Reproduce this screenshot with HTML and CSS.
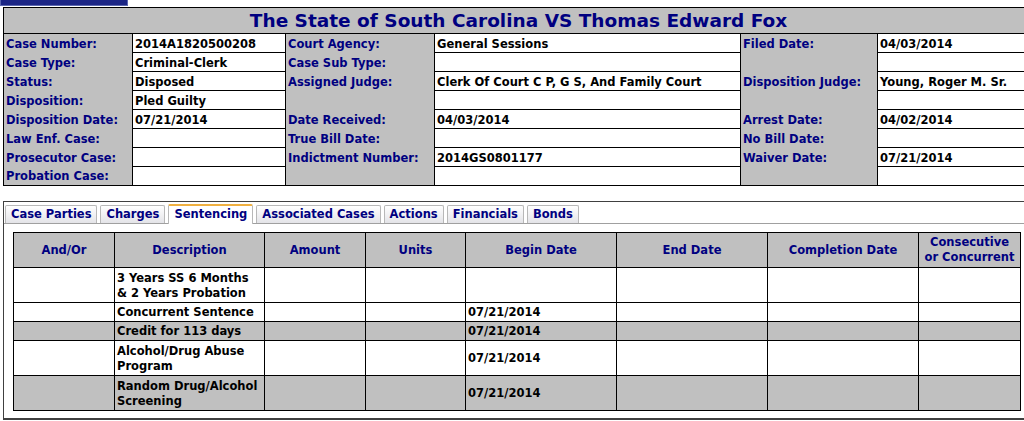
FILE: index.html
```html
<!DOCTYPE html>
<html>
<head>
<meta charset="utf-8">
<link rel="stylesheet" href="styles.css">
</head>
<body>
<div class="topbar"></div>
<table class="case">
  <colgroup>
    <col class="c1"><col class="c2"><col class="c3"><col class="c4"><col class="c5"><col class="c6">
  </colgroup>
  <tr><td colspan="6" class="title">The State of South Carolina VS Thomas Edward Fox</td></tr>
  <tr><td class="lbl">Case Number:</td><td class="val">2014A1820500208</td><td class="lbl">Court Agency:</td><td class="val">General Sessions</td><td class="lbl">Filed Date:</td><td class="val">04/03/2014</td></tr>
  <tr><td class="lbl">Case Type:</td><td class="val">Criminal-Clerk</td><td class="lbl">Case Sub Type:</td><td class="val"></td><td class="lbl"></td><td class="val"></td></tr>
  <tr><td class="lbl">Status:</td><td class="val">Disposed</td><td class="lbl">Assigned Judge:</td><td class="val">Clerk Of Court C P, G S, And Family Court</td><td class="lbl">Disposition Judge:</td><td class="val">Young, Roger M. Sr.</td></tr>
  <tr><td class="lbl">Disposition:</td><td class="val">Pled Guilty</td><td class="lbl"></td><td class="val"></td><td class="lbl"></td><td class="val"></td></tr>
  <tr><td class="lbl">Disposition Date:</td><td class="val">07/21/2014</td><td class="lbl">Date Received:</td><td class="val">04/03/2014</td><td class="lbl">Arrest Date:</td><td class="val">04/02/2014</td></tr>
  <tr><td class="lbl">Law Enf. Case:</td><td class="val"></td><td class="lbl">True Bill Date:</td><td class="val"></td><td class="lbl">No Bill Date:</td><td class="val"></td></tr>
  <tr><td class="lbl">Prosecutor Case:</td><td class="val"></td><td class="lbl">Indictment Number:</td><td class="val">2014GS0801177</td><td class="lbl">Waiver Date:</td><td class="val">07/21/2014</td></tr>
  <tr><td class="lbl">Probation Case:</td><td class="val"></td><td class="lbl"></td><td class="val"></td><td class="lbl"></td><td class="val"></td></tr>
</table>

<div class="panel">
  <ul class="tabs">
    <li class="tab">Case Parties</li>
    <li class="tab">Charges</li>
    <li class="tab active">Sentencing</li>
    <li class="tab">Associated Cases</li>
    <li class="tab">Actions</li>
    <li class="tab">Financials</li>
    <li class="tab">Bonds</li>
  </ul>
  <div class="panel-body">
    <table class="sent">
      <colgroup>
        <col class="s1"><col class="s2"><col class="s3"><col class="s4"><col class="s5"><col class="s6"><col class="s7"><col class="s8">
      </colgroup>
      <tr class="head"><th>And/Or</th><th>Description</th><th>Amount</th><th>Units</th><th>Begin Date</th><th>End Date</th><th>Completion Date</th><th>Consecutive<br>or Concurrent</th></tr>
      <tr class="tall"><td></td><td>3 Years SS 6 Months<br>&amp; 2 Years Probation</td><td></td><td></td><td></td><td></td><td></td><td></td></tr>
      <tr><td></td><td>Concurrent Sentence</td><td></td><td></td><td>07/21/2014</td><td></td><td></td><td></td></tr>
      <tr class="alt"><td></td><td>Credit for 113 days</td><td></td><td></td><td>07/21/2014</td><td></td><td></td><td></td></tr>
      <tr class="tall"><td></td><td>Alcohol/Drug Abuse<br>Program</td><td></td><td></td><td>07/21/2014</td><td></td><td></td><td></td></tr>
      <tr class="tall alt"><td></td><td>Random Drug/Alcohol<br>Screening</td><td></td><td></td><td>07/21/2014</td><td></td><td></td><td></td></tr>
    </table>
  </div>
</div>
</body>
</html>
```

FILE: styles.css
```css
html, body {
  margin: 0;
  padding: 0;
  background: #ffffff;
  overflow: hidden;
}
body {
  font-family: "DejaVu Sans", Verdana, sans-serif;
  font-size: 11.5px;
  font-weight: bold;
  width: 1024px;
  height: 421px;
}
.topbar {
  width: 126px;
  height: 5px;
  background: #1b2585;
  border: 1px solid #5a66b0;
  border-top: none;
  margin-left: 0;
}
.case {
  border-collapse: collapse;
  table-layout: fixed;
  width: 1030px;
  margin-left: 3px;
  margin-top: 1px;
  border: 1px solid #000;
}
.c1 { width: 129px; }
.c2 { width: 153px; }
.c3 { width: 149px; }
.c4 { width: 306px; }
.c5 { width: 137px; }
.c6 { width: 156px; }
.case td {
  height: 17px;
  padding: 1px 0 0 2px;
  white-space: nowrap;
  overflow: hidden;
  line-height: 14px;
}
.case .title {
  height: 25px;
  background: #c0c0c0;
  color: #000080;
  text-align: center;
  font-size: 18.5px;
  line-height: 24px;
  border-bottom: 1px solid #000;
  padding: 0;
}
.case .lbl {
  background: #c0c0c0;
  color: #000080;
}
.case .val {
  background: #ffffff;
  color: #000;
  border: 1px solid #000;
}
.panel {
  margin: 15px 0 0 3px;
  width: 1021px;
  height: 219px;
  border: 1px solid #404040;
  border-right: none;
  border-bottom: 2px solid #404040;
  box-sizing: border-box;
}
.tabs {
  list-style: none;
  margin: 0;
  padding: 3px 0 0 1px;
  display: flex;
  gap: 3px;
  border-bottom: 1px solid #a0a0a0;
  height: 18px;
  align-items: flex-end;
  box-sizing: content-box;
}
.tab {
  height: 17px;
  line-height: 17px;
  padding: 0 5px;
  border: 1px solid #b8b8b8;
  border-bottom: none;
  border-radius: 2px 2px 0 0;
  background: linear-gradient(#ffffff, #e4e4e8);
  color: #000080;
  box-sizing: content-box;
}
.tab.active {
  background: #ffffff;
  border-top: 2px solid #f0b040;
  height: 17px;
  margin-bottom: -1px;
  padding-bottom: 1px;
}
.panel-body {
  padding: 8px 0 0 9px;
}
.sent {
  border-collapse: collapse;
  table-layout: fixed;
  width: 1007px;
  border: 1px solid #000;
}
.s1 { width: 101px; }
.s2 { width: 150px; }
.s3 { width: 101px; }
.s4 { width: 100px; }
.s5 { width: 151px; }
.s6 { width: 151px; }
.s7 { width: 151px; }
.s8 { width: 102px; }
.sent th {
  background: #c0c0c0;
  color: #000080;
  height: 34px;
  border: 1px solid #000;
  padding: 0;
  line-height: 15px;
  font-weight: bold;
}
.sent td {
  border: 1px solid #000;
  height: 17px;
  padding: 1px 0 0 2px;
  line-height: 15px;
  color: #000;
  vertical-align: middle;
  white-space: nowrap;
  overflow: hidden;
}
.sent tr.tall td {
  height: 33px;
}
.sent tr.alt td {
  background: #c0c0c0;
}
```
